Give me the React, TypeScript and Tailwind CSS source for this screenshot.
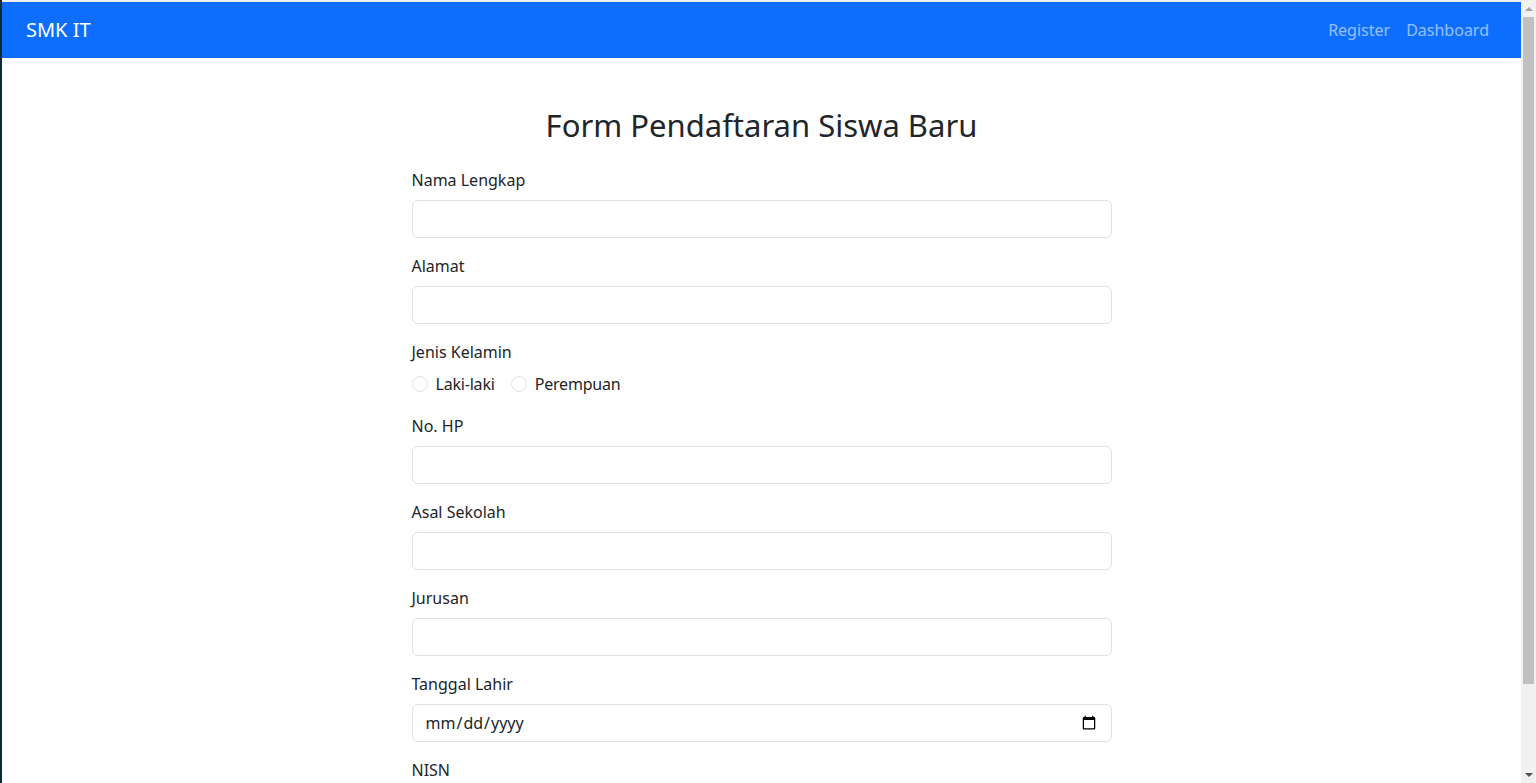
import React from 'react';

const font = { fontFamily: '"Noto Sans", "Open Sans", sans-serif' };

const Field: React.FC<{ label: string; type?: string }> = ({ label, type = 'text' }) => (
  <div className="mb-4">
    <label className="block mb-2 text-base leading-6 text-[#212529]">{label}</label>
    <input
      type={type}
      className="block w-full h-[38px] px-3 py-1.5 text-base leading-6 text-[#212529] bg-white border border-[#dee2e6] rounded-md outline-none"
    />
  </div>
);

const Radio: React.FC<{ label: string }> = ({ label }) => (
  <label className="inline-flex items-center mr-4 text-base leading-6 text-[#212529] tracking-[-0.2px]">
    <span className="w-4 h-4 rounded-full border border-[#dee2e6] bg-white mr-2" />
    {label}
  </label>
);

export default function App() {
  return (
    <div className="flex h-[783px] w-full overflow-hidden bg-white" style={font}>
      <div className="w-[2px] shrink-0 bg-[#0c2a3a]" />

      <div className="flex-1 flex flex-col min-w-0 min-h-0">
        <div className="h-[2px] shrink-0 bg-[#eeeeee]" />
        <nav className="h-14 shrink-0 bg-[#0d6efd] flex items-center justify-between pl-6 pr-6">
          <span className="text-xl text-white">SMK IT</span>
          <div className="flex">
            <a className="px-2 text-base text-white/55">Register</a>
            <a className="px-2 text-base text-white/55">Dashboard</a>
          </div>
        </nav>

        <main className="flex-1 min-h-0 overflow-hidden">
          <div className="w-[700px] mx-auto">
            <h2 className="mt-12 mb-6 text-[31px] leading-[38px] text-center font-normal text-[#212529]">
              Form Pendaftaran Siswa Baru
            </h2>
            <form>
              <Field label="Nama Lengkap" />
              <Field label="Alamat" />
              <div className="mb-4">
                <label className="block mb-2 text-base leading-6 text-[#212529]">Jenis Kelamin</label>
                <div className="h-[26px] flex items-start">
                  <Radio label="Laki-laki" />
                  <Radio label="Perempuan" />
                </div>
              </div>
              <Field label="No. HP" />
              <Field label="Asal Sekolah" />
              <Field label="Jurusan" />
              <Field label="Tanggal Lahir" type="date" />
              <Field label="NISN" />
              <button
                type="button"
                className="px-3 py-1.5 text-base text-white bg-[#0d6efd] rounded-md"
              >
                Daftar
              </button>
            </form>
          </div>
        </main>
      </div>

      <div className="w-[15px] shrink-0 bg-[#f1f1f1] flex flex-col items-center">
        <div className="h-[17px] flex items-center justify-center">
          <div className="w-0 h-0 border-l-[4px] border-r-[4px] border-b-[4px] border-l-transparent border-r-transparent border-b-[#a3a3a3]" />
        </div>
        <div className="w-[11px] h-[667px] bg-[#c1c1c1]" />
        <div className="flex-1" />
        <div className="h-[17px] flex items-center justify-center">
          <div className="w-0 h-0 border-l-[4px] border-r-[4px] border-t-[4px] border-l-transparent border-r-transparent border-t-[#505050]" />
        </div>
      </div>
    </div>
  );
}
